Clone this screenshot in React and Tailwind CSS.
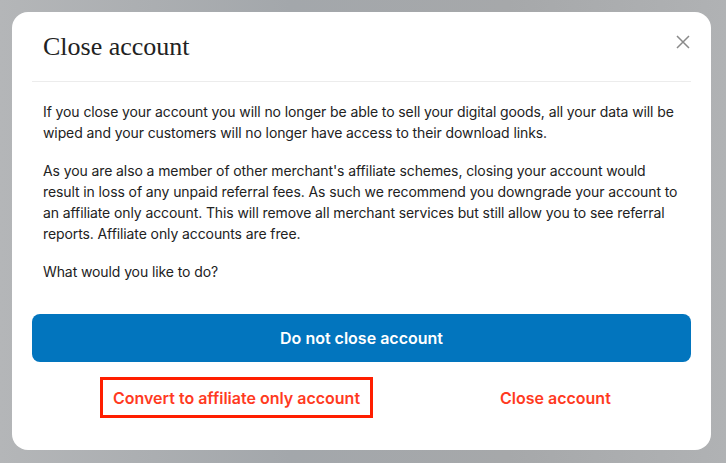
export default function App() {
  return (
    <div className="w-[726px] h-[463px] overflow-hidden bg-[linear-gradient(90deg,#b4b6b8_0%,#a3a7ab_40%,#a6a8aa_70%,#b0b2b4_100%)] pt-[12px] pl-[12px]">
      <div className="w-[699px] h-[438px] bg-white rounded-[16px] flex flex-col px-[20px]">
        <div className="flex items-start justify-between border-b border-[#ececec] h-[70px]">
          <h1 className="ml-[11px] mt-[20px] text-[26px] leading-[30px] text-[#222]" style={{ fontFamily: '"Liberation Serif", serif' }}>
            Close account
          </h1>
          <svg className="mt-[23px] mr-[1px]" width="14" height="14" viewBox="0 0 14 14" fill="none" stroke="#8a8a8a" strokeWidth="1.5">
            <path d="M1 1 L13 13 M13 1 L1 13" />
          </svg>
        </div>
        <div className="px-[11px] pt-[19px] text-[14px] leading-[21px] tracking-[-0.1px] text-[#222] flex flex-col gap-[17px]" style={{ fontFamily: '"Inter", sans-serif' }}>
          <p>If you close your account you will no longer be able to sell your digital goods, all your data will be wiped and your customers will no longer have access to their download links.</p>
          <p>As you are also a member of other merchant's affiliate schemes, closing your account would result in loss of any unpaid referral fees. As such we recommend you downgrade your account to an affiliate only account. This will remove all merchant services but still allow you to see referral reports. Affiliate only accounts are free.</p>
          <p>What would you like to do?</p>
        </div>
        <button className="mt-[32px] h-[48px] w-full rounded-[8px] bg-[#0275be] text-white text-[16px] font-semibold" style={{ fontFamily: '"Inter", sans-serif' }}>
          Do not close account
        </button>
        <div className="flex items-center mt-[15px] pl-[68px]" style={{ fontFamily: '"Inter", sans-serif' }}>
          <button className="h-[41px] w-[273px] border-[3px] border-[#ff1e00] text-[#ff3a1f] text-[16px] font-semibold flex items-center justify-center">
            Convert to affiliate only account
          </button>
          <button className="ml-[127px] text-[#ff3a1f] text-[16px] font-semibold">Close account</button>
        </div>
      </div>
    </div>
  );
}
